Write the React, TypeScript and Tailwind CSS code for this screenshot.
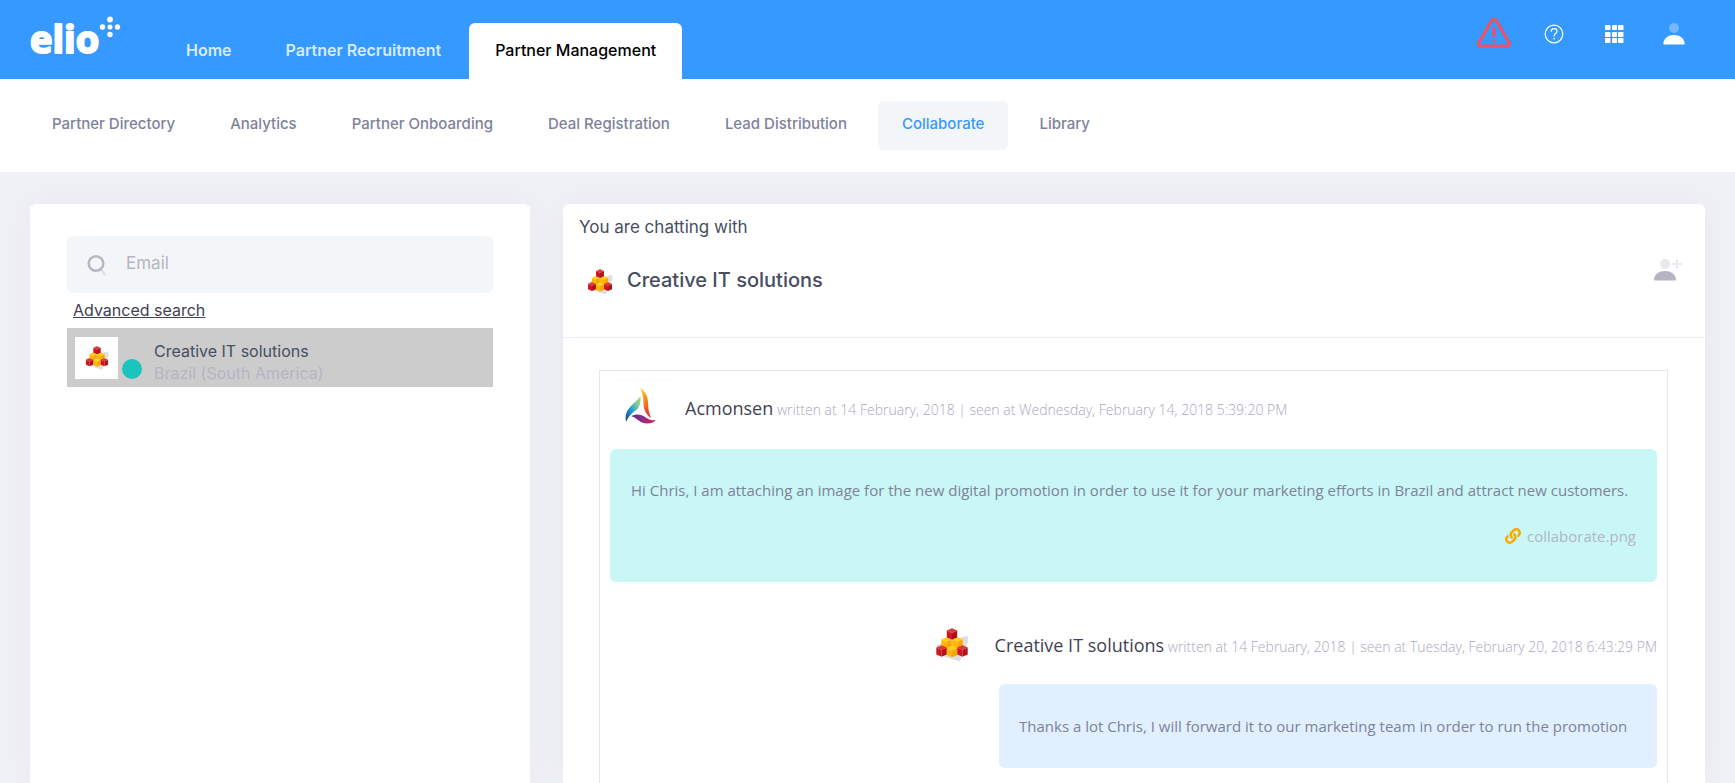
import React from "react";
import { FaLink } from "react-icons/fa";

type Tab = { label: string; active?: boolean };

const mainTabs: Tab[] = [
  { label: "Home" },
  { label: "Partner Recruitment" },
  { label: "Partner Management", active: true },
];

const subTabs: Tab[] = [
  { label: "Partner Directory" },
  { label: "Analytics" },
  { label: "Partner Onboarding" },
  { label: "Deal Registration" },
  { label: "Lead Distribution" },
  { label: "Collaborate", active: true },
  { label: "Library" },
];

function ElioLogo() {
  return (
    <svg viewBox="0 0 96 54" className="h-[54px] w-24" role="img" aria-label="elio">
      <text
        x="0"
        y="41"
        fontSize="38"
        fontWeight="700"
        fill="#fff"
        stroke="#fff"
        strokeWidth="2"
        strokeLinejoin="round"
        className="font-['Open_Sans',sans-serif]"
      >
        elio
      </text>
      <g fill="#fff">
        <circle cx="80" cy="7.5" r="2.9" />
        <circle cx="80" cy="15" r="2.5" />
        <circle cx="80" cy="22.5" r="2.7" />
        <circle cx="72.5" cy="15" r="2.7" />
        <circle cx="87.5" cy="15" r="2.7" />
      </g>
    </svg>
  );
}

function WarningIcon() {
  return (
    <svg viewBox="0 0 36 32" className="h-8 w-9" fill="none" stroke="#f64e60" strokeLinecap="round" strokeLinejoin="round">
      <path d="M15.900 2.300 2.800 24.700a2.200 2.200 0 0 0 1.900 3.300h26.600a2.200 2.200 0 0 0 1.900-3.300L20.100 2.300a2.500 2.500 0 0 0-4.200 0Z" strokeWidth="3" />
      <path d="M18 10.500v7.200" strokeWidth="3" />
      <path d="M18 22.400v.1" strokeWidth="3.2" />
    </svg>
  );
}

function HelpIcon() {
  return (
    <svg viewBox="0 0 20 20" className="size-5" fill="none" stroke="#fff" strokeLinecap="round">
      <circle cx="10" cy="10" r="8.8" strokeWidth="1.2" />
      <path d="M7.200 7.300c.2-1.700 1.300-2.600 2.900-2.600 1.700 0 2.900 1 2.900 2.500 0 2.300-2.900 2.300-2.900 4.800" strokeWidth="1.2" />
      <path d="M10.100 14.400v.3" strokeWidth="1.5" />
    </svg>
  );
}

function GridIcon() {
  const cells = [0, 7, 13];
  return (
    <svg viewBox="0 0 19 19" className="size-[19px]" fill="#fff">
      {cells.map((y) =>
        cells.map((x) => <rect key={`${x}-${y}`} x={x} y={y} width={x === 7 ? 5 : 5.5} height={5} rx="0.8" />),
      )}
    </svg>
  );
}

function UserIcon() {
  return (
    <svg viewBox="0 0 22 22" className="size-[22px]" fill="#fff">
      <circle cx="11" cy="5" r="5" opacity="0.3" />
      <path d="M.3 20.500C.8 15.200 5.200 12 11 12s10.200 3.200 10.700 8.500c0 .6-.3 1-.9 1H1.200c-.6 0-.9-.4-.9-1Z" />
    </svg>
  );
}

function AddUserIcon() {
  return (
    <svg viewBox="0 0 28 22" className="h-[22px] w-7" fill="#b5b5c3">
      <circle cx="11" cy="5" r="5" opacity="0.3" />
      <path d="M22 .5h2V4h4v2h-4v3.500h-2V6h-4V4h4Z" opacity="0.3" />
      <path d="M0 20.500C.5 15.200 5 12 11 12s10.500 3.200 11 8.500c0 .6-.3 1-.9 1H.9c-.6 0-.9-.4-.9-1Z" />
    </svg>
  );
}

function SearchIcon() {
  return (
    <svg viewBox="0 0 20 22" className="h-[22px] w-5 shrink-0" fill="none" stroke="#b5b5c3" strokeLinecap="round">
      <circle cx="9" cy="9.5" r="7.3" strokeWidth="2.5" />
      <path d="m14.500 16.500 3.500 4" strokeWidth="2.2" opacity="0.35" />
    </svg>
  );
}

function Cube({ x, y, top, left, right }: { x: number; y: number; top: string; left: string; right: string }) {
  return (
    <g transform={`translate(${x} ${y})`}>
      <path d="M0-5.800 5.200-3.500 0-1-5.200-3.500Z" fill={top} />
      <path d="M-5.200-3.500 0-1V5.800l-5.200-2.300Z" fill={left} />
      <path d="M5.200-3.500 0-1V5.800l5.200-2.300Z" fill={right} />
    </g>
  );
}

function CubesLogo({ className }: { className: string }) {
  const red = { top: "#e0353b", left: "#cf1620", right: "#b0121a" };
  const yellow = { top: "#ffcf1a", left: "#ffb800", right: "#fba500" };
  return (
    <svg viewBox="0 0 33 34" className={className} role="img" aria-label="Creative IT solutions logo">
      <path d="M1 17 32 7.500 33 13l-9 20.500L2 26.500Z" fill="#dedede" />
      <Cube x={11} y={15} {...yellow} />
      <Cube x={22} y={15} {...yellow} />
      <Cube x={16.5} y={23.5} {...yellow} />
      <Cube x={16.5} y={6} {...red} />
      <Cube x={6} y={23} {...red} />
      <Cube x={27} y={23} {...red} />
    </svg>
  );
}

function AcmonsenLogo() {
  return (
    <svg viewBox="0 0 32 38" className="h-[38px] w-8" role="img" aria-label="Acmonsen logo">
      <defs>
        <linearGradient id="acm-warm" x1="0" y1="0" x2="0.4" y2="1">
          <stop offset="0" stopColor="#f9dc1c" />
          <stop offset="0.5" stopColor="#f68b1f" />
          <stop offset="1" stopColor="#e8352c" />
        </linearGradient>
        <linearGradient id="acm-cool" x1="1" y1="0" x2="0.1" y2="1">
          <stop offset="0" stopColor="#b8d96a" />
          <stop offset="0.3" stopColor="#7fcba0" />
          <stop offset="0.6" stopColor="#1fa0d8" />
          <stop offset="1" stopColor="#1b3f98" />
        </linearGradient>
        <linearGradient id="acm-violet" x1="0" y1="0" x2="1" y2="0.3">
          <stop offset="0" stopColor="#5b2d90" />
          <stop offset="0.6" stopColor="#8f2b8c" />
          <stop offset="1" stopColor="#c9275a" />
        </linearGradient>
      </defs>
      <path d="M15.500 0C20 3.500 22.800 8 23 14c.1 6 .8 11 3 16-5-3.500-7.300-8-7.500-14C18.300 9.500 17.500 5 15.500 0Z" fill="url(#acm-warm)" />
      <path d="M15.500 8c.3 6.500-.7 11-3.500 13.500C7.500 24.500 4.500 27 1 34 0 27 1.500 23 5.500 18.500 9.500 14 13 12 15.500 8Z" fill="url(#acm-cool)" />
      <path d="M6 28c5-2.500 10.500-2 14 1 3 2.500 6 3.500 10.500 3-1.500 3.500-8.500 4.500-13.500 2.500C12.500 32.500 11 29.500 6 28Z" fill="url(#acm-violet)" />
    </svg>
  );
}

function MessageHeader({ logo, name, meta }: { logo: React.ReactNode; name: string; meta: string }) {
  return (
    <div className="flex h-[74px] items-center">
      {logo}
      <p className="whitespace-nowrap text-sm font-light text-[#a9a9ba]">
        <a href="#profile" className="text-lg font-normal text-[#3f4254]">
          {name}
        </a>{" "}
        {meta}
      </p>
    </div>
  );
}

export default function App() {
  return (
    <div className="flex min-h-screen flex-col bg-[#f0f1f6] font-[Inter,sans-serif]">
      <header className="flex h-[79px] items-stretch bg-[#3699ff] pl-[30px] pr-[31px]">
        <a href="#home" className="mt-3 w-[130px] shrink-0">
          <ElioLogo />
        </a>
        <nav aria-label="Main" className="flex items-end gap-0.5">
          {mainTabs.map((tab) => (
            <a
              key={tab.label}
              href="#main"
              className={
                tab.active
                  ? "flex h-14 items-center whitespace-nowrap rounded-t-md bg-white px-[26px] pb-0.5 text-base font-medium text-black"
                  : "flex h-14 items-center whitespace-nowrap px-[26px] pb-0.5 text-base font-semibold text-[#d7ebff]"
              }
            >
              {tab.label}
            </a>
          ))}
        </nav>
        <div className="ml-auto flex h-[68px] items-center">
          <button type="button" aria-label="Alerts" className="flex w-[60px] justify-center">
            <WarningIcon />
          </button>
          <button type="button" aria-label="Help" className="flex w-[60px] justify-center">
            <HelpIcon />
          </button>
          <button type="button" aria-label="Apps" className="flex w-[60px] justify-center">
            <GridIcon />
          </button>
          <button type="button" aria-label="Account" className="flex w-[60px] justify-center">
            <UserIcon />
          </button>
        </div>
      </header>

      <nav aria-label="Partner management" className="flex h-[93px] items-center gap-[7px] bg-white px-7">
        {subTabs.map((tab) => (
          <a
            key={tab.label}
            href="#section"
            className={
              tab.active
                ? "flex h-[49px] items-center whitespace-nowrap rounded-md bg-[#f3f6f9] px-6 pb-0.5 text-[15px] font-medium text-[#3699ff]"
                : "flex h-[49px] items-center whitespace-nowrap rounded-md px-6 pb-0.5 text-[15px] font-medium text-[#7e8299]"
            }
          >
            {tab.label}
          </a>
        ))}
      </nav>

      <main className="flex flex-1 items-stretch gap-[33px] px-[30px] pt-8">
        <aside className="w-[500px] shrink-0 rounded-t-md bg-white px-[37px] pt-8 shadow-[0_0_30px_rgba(82,63,105,0.05)]">
          <label className="flex h-[57px] items-center gap-[19px] rounded-md bg-[#f3f6f9] px-5">
            <SearchIcon />
            <input
              type="text"
              aria-label="Email"
              placeholder="Email"
              className="w-full min-w-0 bg-transparent pb-0.5 text-[17px] text-[#3f4254] outline-none placeholder:text-[#b5b5c3]"
            />
          </label>
          <div className="flex h-[35px] items-center px-1.5 pb-0.5">
            <a href="#advanced" className="text-base text-[#3f4254] underline">
              Advanced search
            </a>
          </div>
          <div className="flex h-[59px] items-center bg-[#ccc] px-2">
            <div className="flex h-[42px] w-[43px] items-center justify-center bg-white">
              <CubesLogo className="size-6" />
            </div>
            <span className="ml-1 mt-[22px] size-5 rounded-full bg-[#1bc5bd]" />
            <div className="ml-3 mt-2 text-base leading-[22px]">
              <a href="#creative" className="block text-[#464e5f]">
                Creative IT solutions
              </a>
              <span className="block text-[#b5b5c3]">Brazil (South America)</span>
            </div>
          </div>
        </aside>

        <section className="flex min-w-0 flex-1 flex-col rounded-t-md bg-white shadow-[0_0_30px_rgba(82,63,105,0.05)]">
          <div className="h-[134px] border-b border-[#ebedf3] px-4 pt-[11px]">
            <p className="text-[17px] leading-6 text-[#464e5f]">You are chatting with</p>
            <div className="mt-5 flex items-center pl-2 pr-[7px]">
              <CubesLogo className="mt-1 size-[26px]" />
              <h1 className="ml-[14px] text-xl font-medium text-[#464e5f]">Creative IT solutions</h1>
              <button type="button" aria-label="Add user" className="mb-5 ml-auto">
                <AddUserIcon />
              </button>
            </div>
          </div>

          <div className="ml-9 mr-[37px] mt-8 flex flex-1 flex-col border border-b-0 border-[#e4e6ef] px-[10px] font-['Open_Sans',sans-serif]">
            <article>
              <MessageHeader
                logo={
                  <span className="mr-3 flex h-[58px] w-[63px] items-center justify-center border-t border-gray-50 pb-1 pr-0.5">
                    <AcmonsenLogo />
                  </span>
                }
                name="Acmonsen"
                meta="written at 14 February, 2018 | seen at Wednesday, February 14, 2018 5:39:20 PM"
              />
              <div className="mt-1 h-[133px] rounded-md bg-[#c9f7f5] px-[21px] pt-[29px] text-[15px] leading-6 text-[#7e8299]">
                <p>Hi Chris, I am attaching an image for the new digital promotion in order to use it for your marketing efforts in Brazil and attract new customers.</p>
                <a href="#attachment" className="mt-[22px] flex items-center justify-end gap-1.5 text-[#b5b5c3]">
                  <FaLink className="size-4 text-[#ffa800]" />
                  collaborate.png
                </a>
              </div>
            </article>

            <article className="mt-[26px] flex flex-col items-end">
              <MessageHeader
                logo={
                  <span className="mr-[26px]">
                    <CubesLogo className="size-[34px]" />
                  </span>
                }
                name="Creative IT solutions"
                meta="written at 14 February, 2018 | seen at Tuesday, February 20, 2018 6:43:29 PM"
              />
              <div className="mt-0.5 h-[84px] w-[658px] rounded-md bg-[#e1f0ff] px-5 pt-[30px] text-[15px] leading-6 text-[#7e8299]">
                <p>Thanks a lot Chris, I will forward it to our marketing team in order to run the promotion</p>
              </div>
            </article>
          </div>
        </section>
      </main>
    </div>
  );
}
